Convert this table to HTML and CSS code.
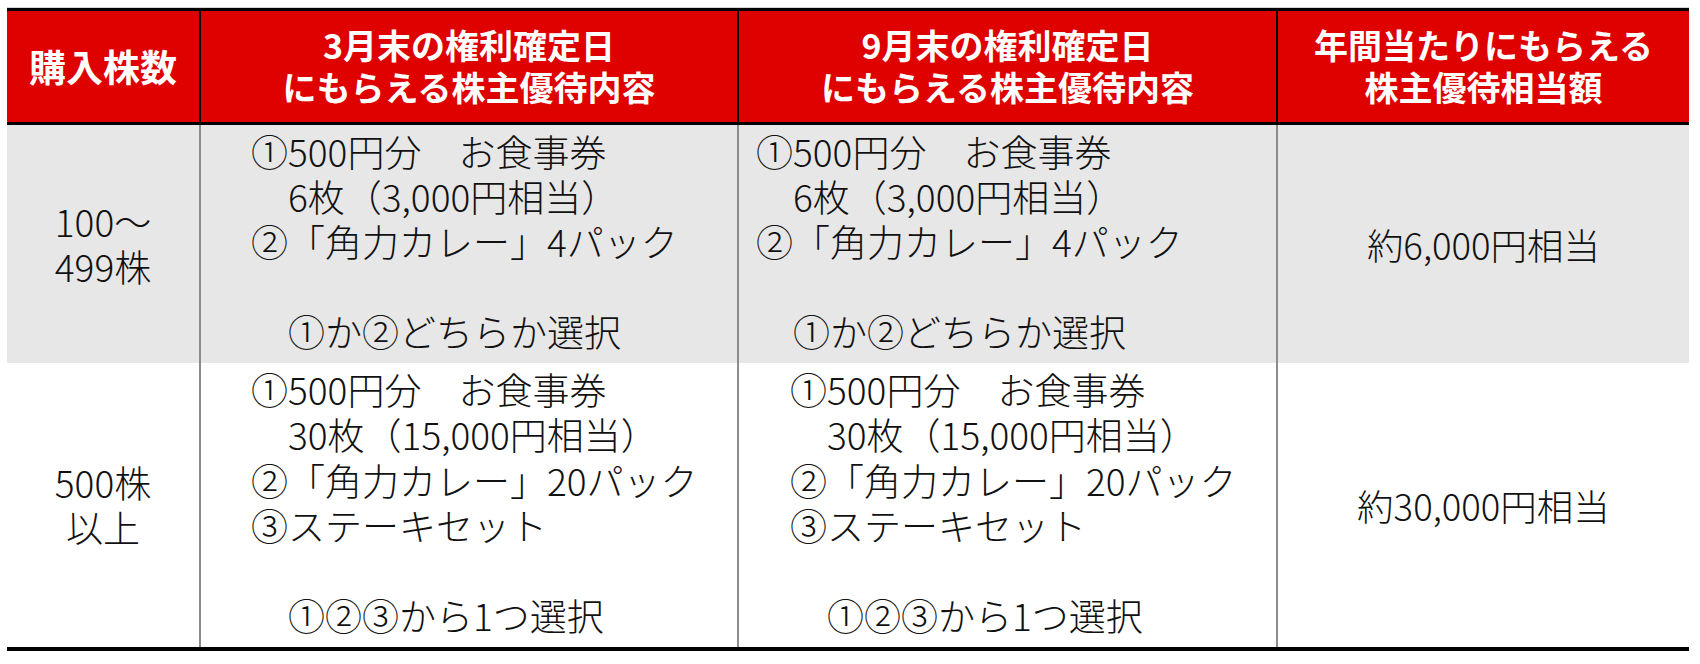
FILE: index.html
```html
<!DOCTYPE html>
<html lang="ja">
<head>
<meta charset="utf-8">
<title>株主優待</title>
<link rel="stylesheet" href="styles.css">
</head>
<body>
<div class="table">
  <div class="cell head first big">購入株数</div>
  <div class="cell head">3月末の権利確定日<br>にもらえる株主優待内容</div>
  <div class="cell head">9月末の権利確定日<br>にもらえる株主優待内容</div>
  <div class="cell head">年間当たりにもらえる<br>株主優待相当額</div>

  <div class="cell body grey first center">100～<br>499株</div>
  <div class="cell body grey list pad-wide">①500円分　お食事券<br>　6枚（3,000円相当）<br>②「角力カレー」4パック<br><br>　①か②どちらか選択</div>
  <div class="cell body grey list pad-narrow">①500円分　お食事券<br>　6枚（3,000円相当）<br>②「角力カレー」4パック<br><br>　①か②どちらか選択</div>
  <div class="cell body grey center amount">約6,000円相当</div>

  <div class="cell body first center">500株<br>以上</div>
  <div class="cell body list pad-wide tall">①500円分　お食事券<br>　30枚（15,000円相当）<br>②「角力カレー」20パック<br>③ステーキセット<br><br>　①②③から1つ選択</div>
  <div class="cell body list pad-wide2 tall">①500円分　お食事券<br>　30枚（15,000円相当）<br>②「角力カレー」20パック<br>③ステーキセット<br><br>　①②③から1つ選択</div>
  <div class="cell body center amount">約30,000円相当</div>
</div>
</body>
</html>
```

FILE: styles.css
```css
* { box-sizing: border-box; }

html, body {
  margin: 0;
  padding: 0;
  background: #ffffff;
}

body {
  font-family: "Noto Sans CJK JP", "Noto Sans", sans-serif;
  color: #111111;
}

.table {
  display: grid;
  grid-template-columns: 192px 538px 539px 413px;
  grid-template-rows: 114px 238px 284px;
  width: 1682px;
  margin: 8px 0 0 7px;
  border-top: 3px solid #000000;
  border-bottom: 4px solid #000000;
  box-shadow: 0 -1px 0 #d4d4d4;
}

.cell {
  border-left: 2px solid #8c8c8c;
}

.cell.first {
  border-left: none;
}

.head {
  background: #df0000;
  color: #ffffff;
  font-weight: 700;
  font-size: 34px;
  line-height: 42px;
  text-align: center;
  display: flex;
  align-items: center;
  justify-content: center;
  border-left-color: #000000;
  border-bottom: 3px solid #000000;
  padding-bottom: 2px;
}

.head.big {
  font-size: 37px;
}

.body {
  font-weight: 300;
  font-size: 37px;
  line-height: 45px;
}

.grey {
  background: #e7e7e7;
}

.center {
  display: flex;
  align-items: center;
  justify-content: center;
  text-align: center;
}

.amount {
  font-size: 36.5px;
}

.list {
  padding-top: 4px;
  white-space: nowrap;
}

.list.tall {
  padding-top: 4px;
  line-height: 45.3px;
}

.pad-wide {
  padding-left: 50px;
}

.pad-narrow {
  padding-left: 17px;
}

.pad-wide2 {
  padding-left: 51px;
}
```
